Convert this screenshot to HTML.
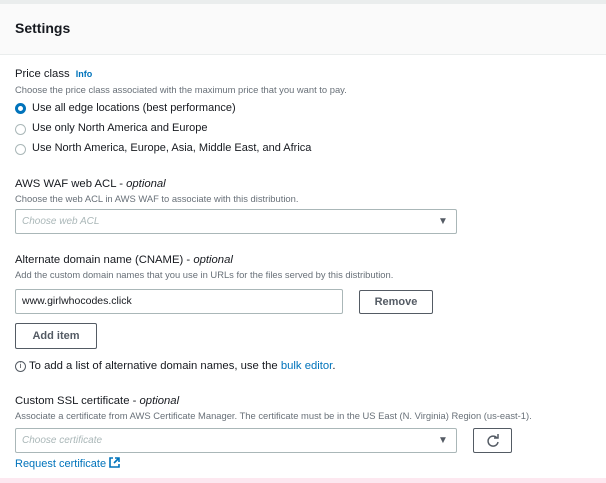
<html><head><style>
body{margin:0;width:606px;height:483px;overflow:hidden;background:#fff;font-family:"Liberation Sans",sans-serif;color:#16191f;position:relative}
.a{position:absolute;white-space:nowrap}
.lbl{font-size:11.3px}
.d{font-size:9.4px;color:#687078}
.r{font-size:11px}
.rad{position:absolute;width:9px;height:9px;border:1px solid #aab7b8;border-radius:50%}
.box{position:absolute;border:1px solid #aab7b8;border-radius:2px;background:#fff}
.btn{position:absolute;border:1px solid #545b64;border-radius:2px;background:#fff;font-weight:bold;font-size:11px;text-align:center;color:#545b64}
i{font-style:italic}
</style></head><body>
<div class="a" style="left:0;top:0;width:606px;height:4px;background:#eaeded"></div>
<div class="a" style="left:0;top:4px;width:606px;height:50px;background:#fafafa;border-bottom:1px solid #eaeded"></div>
<div class="a" style="left:15px;top:20px;font-size:14px;font-weight:bold">Settings</div>
<div class="a lbl" style="left:15px;top:68px">Price class <span style="color:#0073bb;font-weight:bold;font-size:9px;margin-left:3px">Info</span></div>
<div class="a d" style="left:15px;top:84px">Choose the price class associated with the maximum price that you want to pay.</div>
<div class="rad" style="left:15px;top:103px;border:3px solid #0073bb;width:5px;height:5px"></div>
<div class="a r" style="left:32px;top:102px">Use all edge locations (best performance)</div>
<div class="rad" style="left:15px;top:124px"></div>
<div class="a r" style="left:32px;top:122px">Use only North America and Europe</div>
<div class="rad" style="left:15px;top:144px"></div>
<div class="a r" style="left:32px;top:142px">Use North America, Europe, Asia, Middle East, and Africa</div>
<div class="a lbl" style="left:15px;top:178px">AWS WAF web ACL - <i>optional</i></div>
<div class="a d" style="left:15px;top:193px">Choose the web ACL in AWS WAF to associate with this distribution.</div>
<div class="box" style="left:15px;top:209px;width:440px;height:23px"></div>
<div class="a" style="left:22px;top:209px;line-height:25px;font-size:10px;color:#aab7b8;font-style:italic">Choose web ACL</div>
<div class="a" style="left:438px;top:209px;line-height:25px;font-size:10px;color:#545b64">▼</div>
<div class="a lbl" style="left:15px;top:254px">Alternate domain name (CNAME) - <i>optional</i></div>
<div class="a d" style="left:15px;top:269px">Add the custom domain names that you use in URLs for the files served by this distribution.</div>
<div class="box" style="left:15px;top:289px;width:326px;height:23px"></div>
<div class="a" style="left:22px;top:289px;line-height:25px;font-size:10.5px">www.girlwhocodes.click</div>
<div class="btn" style="left:359px;top:290px;width:72px;height:22px;line-height:22px">Remove</div>
<div class="btn" style="left:15px;top:323px;width:80px;height:24px;line-height:24px">Add item</div>
<div class="a" style="left:15px;top:361px;width:9px;height:9px;border:1px solid #545b64;border-radius:50%;font-size:7px;text-align:center;line-height:9px">i</div>
<div class="a" style="left:29px;top:360px;font-size:11.3px">To add a list of alternative domain names, use the <span style="color:#0073bb">bulk editor</span>.</div>
<div class="a lbl" style="left:15px;top:395px">Custom SSL certificate - <i>optional</i></div>
<div class="a d" style="left:15px;top:410px">Associate a certificate from AWS Certificate Manager. The certificate must be in the US East (N. Virginia) Region (us-east-1).</div>
<div class="box" style="left:15px;top:428px;width:440px;height:23px"></div>
<div class="a" style="left:22px;top:428px;line-height:25px;font-size:10px;color:#aab7b8;font-style:italic">Choose certificate</div>
<div class="a" style="left:438px;top:428px;line-height:25px;font-size:10px;color:#545b64">▼</div>
<div class="btn" style="left:473px;top:428px;width:37px;height:23px"><svg width="14" height="14" viewBox="0 0 14 14" style="margin-top:5px"><path d="M11 4A5 5 0 1 0 12 8" fill="none" stroke="#545b64" stroke-width="1.5"/><path d="M8 4h4V0" fill="none" stroke="#545b64" stroke-width="1.5"/></svg></div>
<div class="a" style="left:15px;top:457px;font-size:11px;color:#0073bb">Request certificate <svg width="11" height="11" viewBox="0 0 11 11" style="vertical-align:-1px"><path d="M4 1H1v9h9V7M6 1h4v4M10 1L5 6" fill="none" stroke="#0073bb" stroke-width="1.6"/></svg></div>
<div class="a" style="left:0;top:478px;width:606px;height:5px;background:#fde8f0"></div>
</body></html>
